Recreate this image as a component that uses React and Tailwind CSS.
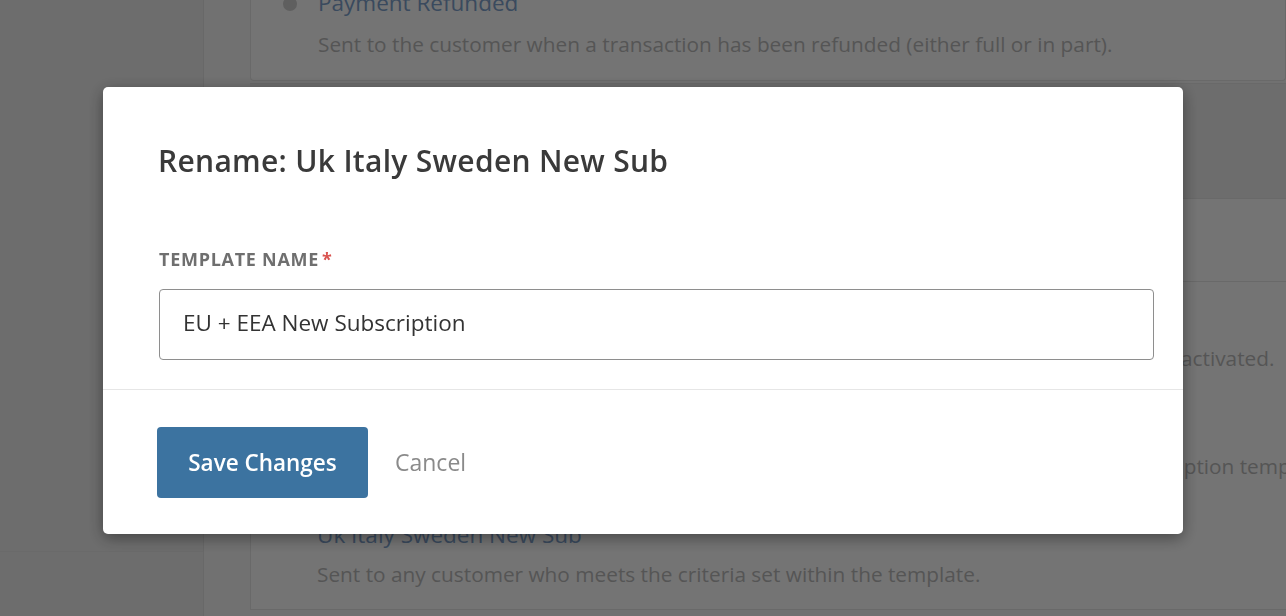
import { useState } from "react";

const rows = [
    { title: "New Subscription Activated", desc: "Sent to the customer when their subscription has been created, renewed, or successfully activated." },
    { title: "EU + EEA New Subscription", desc: "Sent to the customer when a new subscription has been created using the chosen subscription template rules." },
    { title: "Uk Italy Sweden New Sub", desc: "Sent to any customer who meets the criteria set within the template." },
];

const RenameModal = () => {
    const [name, setName] = useState("EU + EEA New Subscription");

    return (
        <div className="fixed inset-0 bg-black/[0.545] flex justify-center items-start pt-[87px]">
            <div className="w-[1080px] bg-white rounded-[5px] shadow-[0_4px_16px_rgba(0,0,0,0.4)]">
                <div className="px-[55px] pt-[56px]">
                    <h2 className="text-[30px] leading-[36px] font-semibold tracking-[0.01em] text-[#3a3a3a]">Rename: Uk Italy Sweden New Sub</h2>
                </div>
                <div className="pl-[56px] pr-[29px] pt-[68px] pb-[29px] border-b border-[#e6e6e6]">
                    <label className="block text-[18px] leading-[24px] font-bold uppercase tracking-[0.04em] text-[#6f6f6f]">
                        Template Name<span className="text-[#d9534f] ml-[3px]">*</span>
                    </label>
                    <input
                        type="text"
                        value={name}
                        onChange={(e) => setName(e.target.value)}
                        className="mt-[18px] block w-full h-[71px] px-[23px] pb-[4px] border border-[#8e8e8e] rounded-[4px] text-[22.5px] text-[#333] outline-none"
                    />
                </div>
                <div className="px-[54px] pt-[37px] pb-[36px] flex items-center gap-[27px]">
                    <button className="w-[211px] h-[71px] rounded-[4px] bg-[#3c73a0] text-white text-[22.5px] font-semibold">Save Changes</button>
                    <button className="text-[23px] text-[#8a8a8a]">Cancel</button>
                </div>
            </div>
        </div>
    );
};

const App = () => {
    return (
        <div className="h-[616px] overflow-hidden flex bg-[#f8f8f8] font-['Open_Sans',sans-serif]">
            <div className="w-[204px] shrink-0 bg-[#f0f0f0] border-r border-[#e4e4e4]">
                <div className="h-[552px] border-b border-[#e8e8e8]"></div>
            </div>
            <div className="flex-1 pl-[46px] flex flex-col min-w-0">
                <div className="-mt-[33px] bg-white border border-t-0 border-[#e6e6e6] rounded-b-[4px] pl-[32px] pt-[22px] pb-[22px] flex">
                    <span className="mt-[8px] w-[14px] h-[14px] rounded-full bg-[#d1d1d1] shrink-0"></span>
                    <div className="ml-[21px] min-w-0">
                        <p className="text-[22.5px] leading-[28px] text-[#80a3ce]">Payment Refunded</p>
                        <p className="mt-[13px] text-[20.8px] leading-[28px] text-[#bcbcbc] whitespace-nowrap">Sent to the customer when a transaction has been refunded (either full or in part).</p>
                    </div>
                </div>
                <div className="mt-[2px] h-[116px] bg-[#efefef] border-y border-[#e6e6e6]"></div>
                <div className="h-[83px] bg-white border-b border-[#e6e6e6]"></div>
                <div className="bg-white pt-[3px] border-l border-[#e6e6e6]">
                    {rows.map((row, i) => (
                        <div key={i} className={"pl-[66px] pt-[20px] pb-[21px] whitespace-nowrap " + (i === rows.length - 1 ? "border-b border-[#e6e6e6]" : "")}>
                            <p className="text-[22.5px] leading-[28px] text-[#80a3ce]">{row.title}</p>
                            <p className="mt-[11px] text-[20.8px] leading-[28px] text-[#bcbcbc]">{row.desc}</p>
                        </div>
                    ))}
                </div>
            </div>
            <RenameModal />
        </div>
    );
};

export default App;
